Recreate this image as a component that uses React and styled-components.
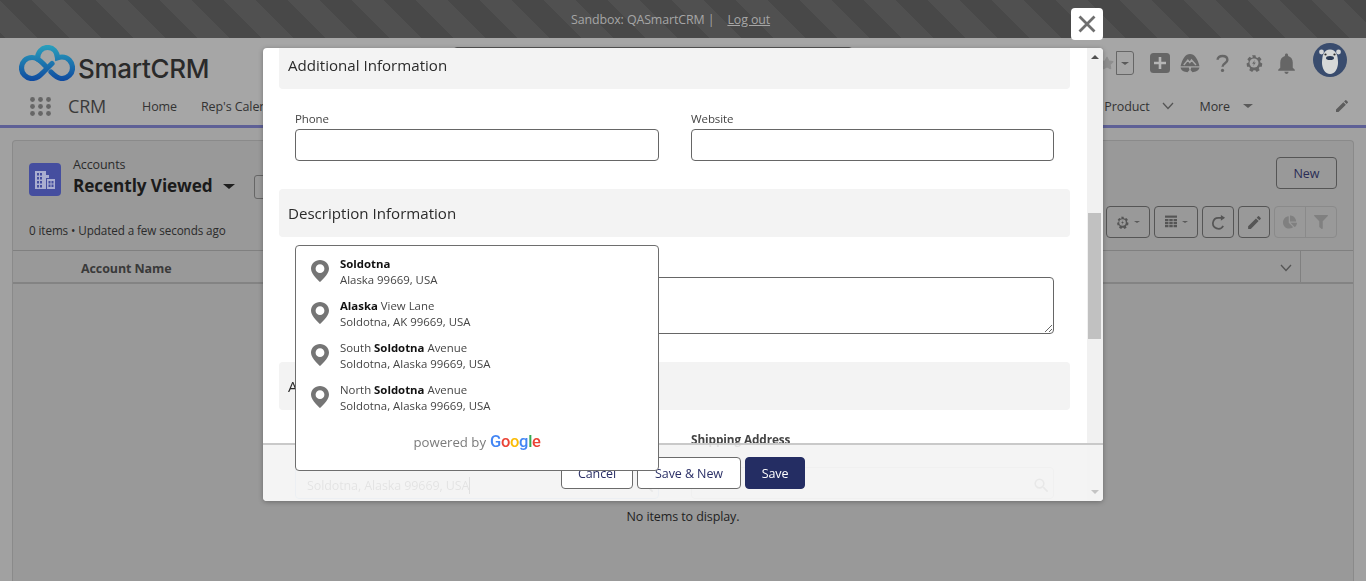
import React from "react";
import styled, { createGlobalStyle } from "styled-components";
import { FaStar, FaFilter, FaChartPie } from "react-icons/fa";
import { MdEdit, MdNotifications, MdSearch } from "react-icons/md";

const FONT = `"Open Sans", "Noto Sans", sans-serif`;

const Global = createGlobalStyle`
  html, body { margin: 0; padding: 0; width: 1366px; height: 581px; overflow: hidden; background: #a1a1a1; }
  * { box-sizing: border-box; }
  body { font-family: ${FONT}; font-size: 12.5px; color: #222; letter-spacing: -0.1px; }
`;

const Page = styled.div`width: 1366px; height: 581px; overflow: hidden; display: flex; flex-direction: column;`;

const SandboxBar = styled.div`
  height: 38px; flex: none; display: flex; align-items: center; justify-content: center; gap: 13px;
  padding-right: 25px; color: #a6a6a6; font-size: 12.4px;
  background: repeating-linear-gradient(45deg, #484848 0 4.2px, #505050 4.2px 26.83px, #484848 26.83px 45.25px);
`;
const LogOut = styled.a`color: #a6a6a6; text-decoration: underline;`;

const Header = styled.header`
  height: 52px; flex: none; background: #a6a6a6; display: flex; align-items: flex-start; position: relative;
  padding: 7px 19px 0 19px;
`;
const LogoWrap = styled.div`display: flex; align-items: flex-start; width: 434px; flex: none;`;
const Wordmark = styled.span`font-size: 26px; line-height: 36px; margin: 6px 0 0 3px; color: #2a2a2a; letter-spacing: -0.3px; font-family: "Inter", sans-serif; font-weight: 500;`;
const SearchBox = styled.div`width: 400px; height: 32px; margin-top: 2px; border: 1px solid #555; border-radius: 4px; flex: none;`;
const Actions = styled.div`margin-left: auto; display: flex; align-items: flex-start; color: #646464;`;
const StarBox = styled.div`display: flex; align-items: center; height: 24px; margin-top: 6px; margin-right: 16px; color: #8e8e8e;`;
const StarDrop = styled.div`width: 18px; height: 24px; border: 1px solid #666; border-radius: 0 3px 3px 0; display: flex; align-items: center; justify-content: center; margin-left: 2px;`;
const Caret = styled.i`
  display: block; width: 0; height: 0; border-left: ${p => p.$s || 4}px solid transparent; border-right: ${p => p.$s || 4}px solid transparent;
  border-top: ${p => p.$s ? p.$s * 0.85 : 4}px solid ${p => p.$c || "#5a5a5a"};
`;
const IconSlot = styled.div`width: ${p => p.$w || 32}px; height: 24px; margin-top: 6px; margin-left: ${p => p.$ml || 0}px; display: flex; align-items: center; justify-content: center; color: #666;`;
const Avatar = styled.div`width: 34px; height: 34px; margin: -2px 0 0 5px; flex: none;`;

const NavBar = styled.nav`
  height: 38px; flex: none; background: #a6a6a6; border-bottom: 3px solid #5e6096; display: flex; align-items: center;
  padding: 0 16px 3px 30px; color: #333;
`;
const AppName = styled.span`font-size: 18px; margin: 0 36px 0 17px; color: #3a3a3a; letter-spacing: -0.2px;`;
const NavItem = styled.span`margin-right: 24px; white-space: nowrap;`;
const NavRight = styled.div`margin-left: auto; display: flex; align-items: center; color: #333;`;
const NavLabel = styled.span`display: inline-block;`;
const NavChevron = styled.span`display: flex; margin: 0 26px 0 12px;`;
const NavCaret = styled.span`display: flex; margin-left: 13px;`;
const NavPencil = styled.span`display: flex; color: #5d5d5d; margin-left: 81px;`;

const Body = styled.main`flex: 1; padding: 12px 12px 0 12px;`;
const Card = styled.section`height: 461px; background: #999; border: 1px solid #8a8a8a; border-bottom: none; border-radius: 4px 4px 0 0;`;
const CardTop = styled.div`height: 109px; padding: 16px 16px 0; display: grid; grid-template-columns: 1fr auto; position: relative;`;
const Titles = styled.div`display: flex; gap: 12px; padding-top: 6px;`;
const ObjectIcon = styled.div`width: 32px; height: 33px; background: #454e9f; border-radius: 4px; display: flex; align-items: center; justify-content: center;`;
const TitleText = styled.div`margin-top: -6px;`;
const Crumb = styled.div`font-size: 12.5px; line-height: 15px; color: #2b2b2b;`;
const ViewTitle = styled.div`display: flex; align-items: center; font-size: 17.2px; font-weight: 700; line-height: 28px; color: #1b1b1b; letter-spacing: -0.1px;`;
const ViewCaret = styled.span`margin: 0 0 0 10px;`;
const Pinbtn = styled.span`width: 24px; height: 24px; margin: 2px 0 0 19px; border: 1px solid #666; border-radius: 3px; display: inline-block;`;
const Meta = styled.div`position: absolute; left: 16px; top: 81px; font-size: 11.7px; color: #2b2b2b;`;
const TopRight = styled.div`display: flex; flex-direction: column; align-items: flex-end; gap: 17px;`;
const NewBtn = styled.button`width: 61px; height: 32px; background: transparent; border: 1px solid #555; border-radius: 4px; font: inherit; color: #2a2c55;`;
const Tools = styled.div`display: flex; gap: 4px;`;
const Tool = styled.button`
  width: ${p => p.$w}px; height: 32px; background: transparent; border: 1px solid #555; border-radius: 4px; padding: 0;
  display: flex; align-items: center; justify-content: center; gap: 5px; color: #555;
`;
const ToolGroup = styled.div`display: flex; width: 63px; border: 1px solid #8a8a8a; border-radius: 4px; height: 32px;`;
const ToolPart = styled.div`flex: 1; display: flex; align-items: center; justify-content: center; color: #808080; & + & { border-left: 1px solid #8a8a8a; }`;
const TableHead = styled.div`height: 34px; border-top: 1px solid #808080; border-bottom: 2px solid #838383; display: grid; grid-template-columns: 1287px 1fr; font-weight: 700; color: #3a3a3a;`;
const HeadCell = styled.div`display: flex; align-items: center; justify-content: space-between; padding: 3px 8px 0 68px; & + & { border-left: 1px solid #808080; }`;
const Empty = styled.div`text-align: center; padding-top: 224px; color: #1f1f1f;`;

const Layer = styled.div`position: fixed; inset: 0; padding: 48px 0 0 263px;`;
const Modal = styled.div`position: relative; width: 840px; height: 453px; background: #fff; border-radius: 4px; box-shadow: 0 1px 5px rgba(0,0,0,.3);`;
const CloseBtn = styled.button`position: absolute; right: 0; top: -40px; width: 32px; height: 32px; background: #fff; border: 0; border-radius: 4px; padding: 0; display: flex; align-items: center; justify-content: center;`;
const ModalClip = styled.div`height: 100%; display: flex; overflow: hidden; border-radius: 4px;`;
const Form = styled.div`flex: 1; padding: 0 17px 0 16px; overflow: hidden; color: #444;`;
const SectionTitle = styled.h3`
  margin: ${p => p.$mt || 28}px 0 0; height: ${p => p.$h || 48}px; background: #f3f3f3; border-radius: 4px; display: flex; align-items: center;
  padding-left: 9px; font-size: 15.1px; font-weight: 400; color: #2b2b2b; letter-spacing: 0;
`;
const FieldRow = styled.div`display: grid; grid-template-columns: 364px 363px; column-gap: 32px; padding: 0 16px; margin-top: ${p => p.$mt || 21}px;`;
const Label = styled.label`display: block; font-size: ${p => p.$b ? 11.8 : 11.5}px; line-height: 17px; margin-bottom: 2px; color: #444; font-weight: ${p => p.$b ? 700 : 400};`;
const TextInput = styled.input`display: block; width: 100%; height: 32px; background: #fff; border: 1px solid #666; border-radius: 4px; outline: 0;`;
const TextArea = styled.textarea`display: block; width: calc(100% - 32px); margin: 40px 16px 0; height: 57px; border: 1px solid #666; border-radius: 4px; outline: 0; background: #fff;`;
const LookupInput = styled.div`
  height: 32px; border: 1px solid ${p => p.$focus ? "#a9cdf0" : "#cfcfcf"}; border-radius: 4px; background: #fff; display: flex; align-items: center;
  justify-content: space-between; padding: 4px 2px 0 11px; margin-top: 19px;
`;
const Caretted = styled.span`border-right: 1px solid #333; line-height: 17px; color: #555;`;
const Scrollbar = styled.div`width: 16px; flex: none; background: #f1f1f1; position: relative;`;
const Thumb = styled.div`width: 13px; height: 126px; margin: 165px 0 0 1px; background: #c1c1c1;`;
const ArrowUp = styled.i`position: absolute; top: 7px; left: 4px; border-left: 4px solid transparent; border-right: 4px solid transparent; border-bottom: 4px solid #505050;`;
const ArrowDown = styled.i`position: absolute; bottom: 7px; right: 4px; border-left: 4px solid transparent; border-right: 4px solid transparent; border-top: 4px solid #c4c4c4;`;
const Footer = styled.div`
  position: absolute; left: 0; right: 0; bottom: 0; height: 58px; background: rgba(243,243,243,.9); border-top: 2px solid #c9c9c9; border-radius: 0 0 4px 4px;
  display: flex; justify-content: center; gap: 4px; padding-top: 12px;
`;
const Btn = styled.button`
  width: ${p => p.$w}px; height: 32px; border-radius: 4px; font: inherit; letter-spacing: -0.1px; border: 1px solid ${p => p.$primary ? "#242d63" : "#6b6b6b"};
  background: ${p => p.$primary ? "#242d63" : "#fff"}; color: ${p => p.$primary ? "#fff" : "#2a2f66"}; padding: 0;
`;

const Suggest = styled.div`position: absolute; left: 32px; top: 197px; width: 364px; height: 226px; background: #fff; border: 1px solid #6e6e6e; border-radius: 4px; padding-top: 10px;`;
const SuggestItem = styled.div`height: 42px; display: flex; align-items: flex-start; padding-left: 15px; gap: 11px;`;
const PinWrap = styled.div`flex: none; margin-top: 4px;`;
const SuggestText = styled.div`font-size: 11.4px; line-height: 16px; color: #444; white-space: nowrap; letter-spacing: 0;`;
const Strong = styled.b`font-weight: 700; color: #111;`;
const Powered = styled.div`display: flex; justify-content: center; align-items: center; gap: 4px; padding: 8px 0 0 0; font-size: 13.2px; color: #7b7b7b; letter-spacing: 0;`;
const GoogleWord = styled.span`font-family: "Roboto", sans-serif; font-size: 16.5px; font-weight: 500; letter-spacing: -0.3px;`;
const Letter = styled.span`color: ${p => p.$c};`;

const Pin = () => (
  <svg width="18" height="22" viewBox="0 0 18 22">
    <path fillRule="evenodd" fill="#757575" d="M9 0C4 0 0 3.8 0 8.7 0 14.5 9 22 9 22s9-7.5 9-13.3C18 3.8 14 0 9 0zm0 4.3a4.4 4.4 0 1 1 0 8.8 4.4 4.4 0 0 1 0-8.8z" />
  </svg>
);

const Logo = () => (
  <svg width="56" height="36" viewBox="0 0 56 36" fill="none" strokeLinecap="round">
    <defs>
      <linearGradient id="lg" gradientUnits="userSpaceOnUse" x1="28" y1="0" x2="28" y2="36">
        <stop offset="0" stopColor="#2aa0bc" />
        <stop offset="1" stopColor="#0f4aa0" />
      </linearGradient>
    </defs>
    <g stroke="url(#lg)" strokeWidth="5.2">
      <path d="M13 33.500C7 33.500 2.500 28.500 2.500 23 2.500 17 7 12.500 13 12.500c2 0 4 .6 5.500 1.500C18.500 7 23 2.500 28.500 2.500 34 2.500 38 6.500 38.500 12.800 40 12.300 41.500 12 43 12c6 0 10.500 5 10.500 11 0 5.500-4.500 10.500-10.500 10.500-5 0-8-3.500-11-6.500" />
      <path d="M13 33.500c6 0 9-4 13-8l7-7" />
      <path d="M18.500 14c3 1.500 5.500 4.500 8 7" />
    </g>
  </svg>
);

const Dots = () => (
  <svg width="21" height="19" viewBox="0 0 21 19" fill="#666">
    {[2.5, 10.5, 18.5].flatMap(x => [2.5, 9.5, 16.5].map(y => <circle key={x + "-" + y} cx={x} cy={y} r="2.4" />))}
  </svg>
);

const PlusSquare = () => (
  <svg width="20" height="20" viewBox="0 0 20 20">
    <rect width="20" height="20" rx="3.5" fill="#666" />
    <path d="M10 4v12M4 10h12" stroke="#b5b5b5" strokeWidth="2.6" />
  </svg>
);
const Trail = () => (
  <svg width="20" height="20" viewBox="0 0 20 20">
    <path d="M10 1C5.500 1 2.500 5.500 .5 13.200h19C17.500 5.500 14.500 1 10 1z" fill="#666" />
    <path d="M.5 14.500h8.300l.7 2.500-2 2.200C4 19 1.500 18 .5 14.500zM19.500 14.500h-8.300l-.7 2.500 2 2.200c3 -.2 6 -1.200 7 -4.700z" fill="#666" />
    <path d="M3.800 12l4-5 2 2.500L11.500 7l4.500 5" stroke="#a6a6a6" strokeWidth="1.4" fill="none" />
  </svg>
);
const Question = () => (
  <svg width="13" height="19" viewBox="0 0 16 22" fill="none">
    <path d="M2 6.500C2 3.500 4.500 1.800 8 1.800s6 1.900 6 4.800c0 4-6 4-6 8.400" stroke="#666" strokeWidth="3" />
    <circle cx="8" cy="19.500" r="2" fill="#666" />
  </svg>
);
const Gear = ({ size = 18, fill = "#666", hole = "#a6a6a6" }) => (
  <svg width={size} height={size} viewBox="0 0 20 20">
    <path fill={fill} d="M8 .8h4l.5 2.500 1.800.8 2.200-1.400 2.600 3-1.700 2 .4 1.800 2.200 1-.6 3.800-2.500.2-1 1.600 1 2.300-3.400 2-1.700-1.900h-2l-1.700 1.900-3.400-2 1-2.300-1-1.600-2.500-.2-.6-3.800 2.200-1 .4-1.800-1.700-2 2.600-3 2.200 1.400 1.800-.8z" transform="translate(10 10) scale(.95) translate(-10.300 -10)" />
    <circle cx="10" cy="10" r="5" fill={hole} />
    <path d="M11 6.500L8 10.700h2l-1 3 3-4.300h-2z" fill={fill} />
  </svg>
);
const Grid = () => (
  <svg width="12" height="14" viewBox="0 0 14 15" fill="#555">
    <rect width="14" height="2.5" />
    {[4, 7.5, 11].flatMap(y => [0, 5, 10].map(x => <rect key={x + "-" + y} x={x} y={y} width="4" height="2.6" />))}
  </svg>
);
const Refresh = () => (
  <svg width="15" height="15" viewBox="0 0 16 16" fill="none">
    <path d="M13 11.500A5.800 5.800 0 1 1 8 3h5" stroke="#555" strokeWidth="1.8" />
    <path d="M10.500 0l4.500 3-4.500 3z" fill="#555" />
  </svg>
);
const Close = () => (
  <svg width="18" height="18" viewBox="0 0 18 18"><path d="M1.500 1.500l15 15M16.500 1.500l-15 15" stroke="#6f6f6f" strokeWidth="2.8" /></svg>
);
const Chevron = () => (
  <svg width="12" height="8" viewBox="0 0 12 8" fill="none"><path d="M1 1l5 5.500L11 1" stroke="#555" strokeWidth="1.3" /></svg>
);
const Building = () => (
  <svg width="20" height="18" viewBox="0 0 20 18" fill="#aaaed0">
    <path fillRule="evenodd" d="M0 0h11v4H14v3h-3v11H0zM2 2v2.500h2V2zm3 0v2.500h2V2zM2 6v2.500h2V6zm3 0v2.500h2V6zM2 10v2.500h2V10zm3 0v2.500h2V10zM2 14v2.500h2V14zm3 0v2.500h2V14z" />
    <path fillRule="evenodd" d="M12 8h8v10h-8zm1.500 2v2.500h2V10zm3 0v2.500h2V10zm-3 3.500V16h2v-2.500zm3 0V16h2v-2.500z" />
  </svg>
);
const Bear = () => (
  <svg width="34" height="34" viewBox="0 0 34 34">
    <circle cx="17" cy="17" r="17" fill="#394c6e" />
    <circle cx="8.500" cy="9" r="2.400" fill="#d4d6d8" />
    <circle cx="25.500" cy="9" r="2.400" fill="#d4d6d8" />
    <path d="M17 6.500c-6 0-8 6-8 13 0 6 3 11.500 8 11.500s8-5.500 8-11.500c0-7-2-13-8-13z" fill="#d6d8d8" />
    <circle cx="12.500" cy="11.500" r="1.100" fill="#2b2b2b" />
    <circle cx="21.500" cy="11.500" r="1.100" fill="#2b2b2b" />
    <ellipse cx="17" cy="15" rx="4" ry="2" fill="#2b3a55" />
  </svg>
);

const suggestions = [
  [<Strong key="a">Soldotna</Strong>, "Alaska 99669, USA"],
  [<React.Fragment key="b"><Strong>Alaska</Strong> View Lane</React.Fragment>, "Soldotna, AK 99669, USA"],
  [<React.Fragment key="c">South <Strong>Soldotna</Strong> Avenue</React.Fragment>, "Soldotna, Alaska 99669, USA"],
  [<React.Fragment key="d">North <Strong>Soldotna</Strong> Avenue</React.Fragment>, "Soldotna, Alaska 99669, USA"],
];

export default function App() {
  return (
    <>
      <Global />
      <Page>
        <SandboxBar>
          <span>Sandbox: QASmartCRM |</span>
          <LogOut>Log out</LogOut>
        </SandboxBar>
        <Header>
          <LogoWrap>
            <Logo />
            <Wordmark>SmartCRM</Wordmark>
          </LogoWrap>
          <SearchBox />
          <Actions>
            <StarBox>
              <FaStar size={14} />
              <StarDrop><Caret $s={4} /></StarDrop>
            </StarBox>
            <IconSlot $w={20}><PlusSquare /></IconSlot>
            <IconSlot $w={20} $ml={10}><Trail /></IconSlot>
            <IconSlot $w={44}><Question /></IconSlot>
            <IconSlot $w={20}><Gear /></IconSlot>
            <IconSlot $w={44}><MdNotifications size={25} /></IconSlot>
            <Avatar><Bear /></Avatar>
          </Actions>
        </Header>
        <NavBar>
          <Dots />
          <AppName>CRM</AppName>
          <NavItem>Home</NavItem>
          <NavItem>Rep's Calendar</NavItem>
          <NavRight>
            <NavLabel>Product</NavLabel>
            <NavChevron><Chevron /></NavChevron>
            <NavLabel>More</NavLabel>
            <NavCaret><Caret $s={5} /></NavCaret>
            <NavPencil><MdEdit size={16} /></NavPencil>
          </NavRight>
        </NavBar>
        <Body>
          <Card>
            <CardTop>
              <Titles>
                <ObjectIcon><Building /></ObjectIcon>
                <TitleText>
                  <Crumb>Accounts</Crumb>
                  <ViewTitle>Recently Viewed<ViewCaret><Caret $s={6} $c="#1f1f1f" /></ViewCaret><Pinbtn /></ViewTitle>
                </TitleText>
              </Titles>
              <Meta>0 items • Updated a few seconds ago</Meta>
              <TopRight>
                <NewBtn>New</NewBtn>
                <Tools>
                  <Tool $w={44}><Gear size={13} fill="#555" hole="#999" /><Caret $s={3} /></Tool>
                  <Tool $w={44}><Grid /><Caret $s={3} /></Tool>
                  <Tool $w={32}><Refresh /></Tool>
                  <Tool $w={32}><MdEdit size={17} /></Tool>
                  <ToolGroup>
                    <ToolPart><FaChartPie size={14} /></ToolPart>
                    <ToolPart><FaFilter size={14} /></ToolPart>
                  </ToolGroup>
                </Tools>
              </TopRight>
            </CardTop>
            <TableHead>
              <HeadCell>Account Name<Chevron /></HeadCell>
              <HeadCell />
            </TableHead>
            <Empty>No items to display.</Empty>
          </Card>
        </Body>
      </Page>

      <Layer>
        <Modal>
          <CloseBtn aria-label="Close"><Close /></CloseBtn>
          <ModalClip>
            <Form>
              <SectionTitle $mt={-7} $h={48}>Additional Information</SectionTitle>
              <FieldRow>
                <div><Label>Phone</Label><TextInput /></div>
                <div><Label>Website</Label><TextInput /></div>
              </FieldRow>
              <SectionTitle>Description Information</SectionTitle>
              <TextArea />
              <SectionTitle>Address Information</SectionTitle>
              <FieldRow>
                <div>
                  <Label $b>Billing Address</Label>
                  <LookupInput $focus><Caretted>Soldotna, Alaska 99669, USA</Caretted><MdSearch size={19} color="#888" /></LookupInput>
                </div>
                <div>
                  <Label $b>Shipping Address</Label>
                  <LookupInput><span /><MdSearch size={19} color="#888" /></LookupInput>
                </div>
              </FieldRow>
            </Form>
            <Scrollbar>
              <ArrowUp />
              <Thumb />
            </Scrollbar>
          </ModalClip>
          <Footer>
            <ArrowDown />
            <Btn $w={72}>Cancel</Btn>
            <Btn $w={104}>Save &amp; New</Btn>
            <Btn $w={60} $primary>Save</Btn>
          </Footer>
          <Suggest>
            {suggestions.map(([main, sub], i) => (
              <SuggestItem key={i}>
                <PinWrap><Pin /></PinWrap>
                <SuggestText>{main}<br />{sub}</SuggestText>
              </SuggestItem>
            ))}
            <Powered>
              <span>powered by</span>
              <GoogleWord>
                <Letter $c="#4285f4">G</Letter><Letter $c="#ea4335">o</Letter><Letter $c="#fbbc05">o</Letter><Letter $c="#4285f4">g</Letter><Letter $c="#34a853">l</Letter><Letter $c="#ea4335">e</Letter>
              </GoogleWord>
            </Powered>
          </Suggest>
        </Modal>
      </Layer>
    </>
  );
}
